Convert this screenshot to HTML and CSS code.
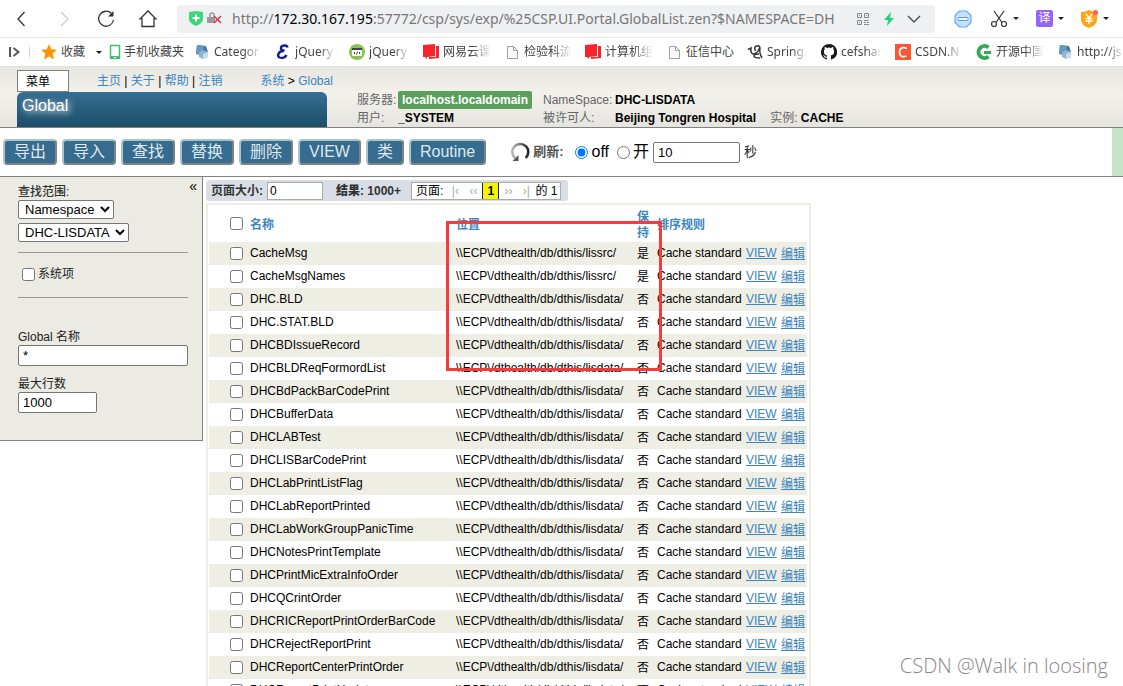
FILE: index.html
```html
<!DOCTYPE html>
<html lang="zh-CN">
<head>
<meta charset="utf-8">
<title>Global</title>
<link rel="stylesheet" href="styles.css">
</head>
<body>
<svg class="defs" aria-hidden="true">
  <symbol id="i-db" viewBox="0 0 16 16"><path d="M3 1l9 1 2 6-3 4-9-2z" fill="#477ba2"/><path d="M3 1l7 1-2 7-6 1z" fill="#6699bd"/><path d="M5 8l4-2 5 2v5l-5 2-4-2z" fill="#8db5d4"/><path d="M9 10l5-2v5l-5 2z" fill="#c9dcea"/></symbol>
  <symbol id="i-red" viewBox="0 0 16 16"><path d="M0 1l12-1v12l-8 1v2l-2-2H0z" fill="#f9242b"/><path d="M13 2h3v12l-10 1v-2h7z" fill="#f9242b"/></symbol>
  <symbol id="i-page" viewBox="0 0 16 16"><path d="M3.500 2.500h6l4 4v8h-10zM9.500 2.500v4h4" fill="#f8f8f8" stroke="#a0a0a0"/></symbol>
</svg>
<div class="browser-bar">
  <button class="icon-btn" aria-label="后退"><svg viewBox="0 0 20 20"><path d="M12.500 3L6 10l6.500 7" class="line"/></svg></button>
  <button class="icon-btn" aria-label="前进"><svg viewBox="0 0 20 20"><path d="M7 3l7 7-7 7" class="line pale"/></svg></button>
  <button class="icon-btn" aria-label="刷新"><svg viewBox="0 0 20 20"><path d="M15.500 4.500A7.500 7.500 0 1 0 17.500 11" class="line"/><path d="M17.500 2v5.500H12z" fill="#333"/></svg></button>
  <button class="icon-btn" aria-label="主页"><svg viewBox="0 0 20 20"><path d="M1.500 10.500L10 2l8.500 8.500M4 9v8.500h12V9" class="line"/></svg></button>
  <div class="address">
    <svg class="shield" viewBox="0 0 14 15"><path d="M0 1l7-1 7 1v7q0 4-7 7-7-3-7-7z" fill="#3fd67a"/><path d="M7 3.500v7M3.500 7h7" stroke="#fff" stroke-width="2"/></svg>
    <svg class="lock" viewBox="0 0 15 13"><path d="M3 6V3q0-2 2-2t2 2v2" fill="none" stroke="#999" stroke-width="1.500"/><path d="M0 5h8v6H0z" fill="#999"/><path d="M7 4l7 7M14 4l-7 7" stroke="#dc3545" stroke-width="1.500"/></svg>
    <span class="url">http://<b>172.30.167.195</b>:57772/csp/sys/exp/%25CSP.UI.Portal.GlobalList.zen?$NAMESPACE=DH</span>
    <svg class="qr" viewBox="0 0 12 12"><path d="M.5.5h4v4h-4zM7.500.5h4v4h-4zM.5 7.500h4v4h-4zM7 7.500h4.500M7 9.500h2M10 9.500h2M7 11.500h5M2 2.500h1M9 2.500h1M2 9.500h1" fill="none" stroke="#888"/></svg>
    <svg class="bolt" viewBox="0 0 12 14"><path d="M8 0L1 8h4l-1 6 7-8H7z" fill="#20d47e"/></svg>
    <svg class="chev" viewBox="0 0 14 14"><path d="M1 4l6 6 6-6" fill="none" stroke="#555" stroke-width="1.500"/></svg>
  </div>
  <div class="tools">
    <svg class="tool" viewBox="0 0 18 18"><path d="M5.500 1h7L17 5.500v7L12.500 17h-7L1 12.500v-7z" fill="#c4e0ff" stroke="#62aaf8" stroke-width="1.200"/><rect x="4" y="7.500" width="10" height="3" rx="1" fill="#fff" stroke="#4b9df5"/></svg>
    <svg class="tool scissors" viewBox="0 0 18 18"><path d="M4 1l8 11.500M14 1L6 12.500" fill="none" stroke="#333" stroke-width="1.200"/><circle cx="4" cy="14" r="2.500" fill="none" stroke="#333" stroke-width="1.200"/><circle cx="14" cy="14" r="2.500" fill="none" stroke="#333" stroke-width="1.200"/></svg>
    <i class="caret"></i>
    <span class="translate">译</span>
    <i class="caret"></i>
    <svg class="tool coin" viewBox="0 0 18 18"><path d="M9 0q4 2 8 2v8q0 5-8 8-8-3-8-8V2q4 0 8-2z" fill="#ffa51c"/><path d="M6 4l3 4 3-4M9 8v6M5.500 8.500h7M5.500 11h7" fill="none" stroke="#fff" stroke-width="1.300"/><circle cx="15.500" cy="2.500" r="2.500" fill="#ff5b5b"/></svg>
    <i class="caret"></i>
  </div>
</div>
<nav class="bookmarks">
  <svg class="toggle" viewBox="0 0 12 12"><path d="M2 1v10" stroke="#555" stroke-width="2"/><path d="M5.500 2l5 4-5 4" fill="none" stroke="#555" stroke-width="2"/></svg>
  <i class="divider"></i>
  <a class="mark fav"><svg viewBox="0 0 16 16"><path d="M8 0l2.300 5.200 5.700.6-4.300 3.800 1.300 5.900L8 12.500l-5 3 1.300-5.900L0 5.800l5.700-.6z" fill="#ff9500"/></svg><span class="label full">收藏</span></a>
  <i class="caret"></i>
  <a class="mark phone"><svg viewBox="0 0 16 16"><path d="M3.500 1.500h9v12h-9z" fill="#fff" stroke="#42bf72" stroke-width="1.500"/><path d="M3 12h10v3H3z" fill="#42bf72"/><path d="M7 13.500h2" stroke="#fff"/></svg><span class="label full">手机收藏夹</span></a>
  <a class="mark"><svg><use href="#i-db"/></svg><span class="label">Categor</span></a>
  <a class="mark"><svg viewBox="0 0 16 16"><path d="M12.500 3.500Q12 1 9 1.500C5 2 5 6 8.500 6.500h1M8.500 7C3 7 2 12 4.500 13.500c2.500 1 6 0 7-2.500" fill="none" stroke="#111b93" stroke-width="2.400"/></svg><span class="label short">jQuery</span></a>
  <a class="mark"><svg viewBox="0 0 16 16"><circle cx="8" cy="8" r="8" fill="#8bc34a"/><rect x="3" y="4" width="10" height="8" rx="1" fill="#fff"/><path d="M3 4h10v2H3z" fill="#37474f"/><path d="M6 8L5 9l1 1M10 8l1 1-1 1M8.500 7.500l-1 3" fill="none" stroke="#37474f"/></svg><span class="label short">jQuery</span></a>
  <a class="mark"><svg><use href="#i-red"/></svg><span class="label">网易云课</span></a>
  <a class="mark"><svg><use href="#i-page"/></svg><span class="label">检验科流</span></a>
  <a class="mark"><svg><use href="#i-red"/></svg><span class="label">计算机组</span></a>
  <a class="mark"><svg><use href="#i-page"/></svg><span class="label solid">征信中心</span></a>
  <a class="mark"><svg viewBox="0 0 16 16"><path d="M1 5.500L4 4q-1 6 3 6 4-1 6-7M8.500 7q-2-4 1-5t3.500 2q-1 5 2 10M12 10q-5 0-5 2t6 2" fill="none" stroke="#333" stroke-width="1.500"/></svg><span class="label short">Spring.</span></a>
  <a class="mark"><svg viewBox="0 0 16 16"><path d="M8 0a8 8 0 0 0-2.500 15.600c.4 0 .5-.2.500-.4v-1.500c-2.200.5-2.700-1-2.700-1-.4-.9-.9-1.200-.9-1.200-.7-.5.1-.5.100-.5.800.1 1.200.8 1.200.8.700 1.300 1.900.9 2.300.7.100-.5.300-.9.500-1.100-1.800-.2-3.600-.9-3.600-4 0-.9.300-1.600.8-2.200-.1-.2-.4-1 .1-2.100 0 0 .7-.2 2.200.8a7.500 7.500 0 0 1 4 0c1.500-1 2.200-.8 2.200-.8.400 1.100.2 1.900.1 2.100.500.6.8 1.300.8 2.200 0 3.100-1.900 3.700-3.700 3.900.3.300.6.800.6 1.500v2.400c0 .2.100.5.600.4A8 8 0 0 0 8 0z" fill="#181717"/></svg><span class="label short">cefshar</span></a>
  <a class="mark"><svg viewBox="0 0 16 16"><path d="M0 0h16v16H0z" fill="#fc5531"/><path d="M12 4.500q-7-3-7.500 3.500 0 6.500 7 4" fill="none" stroke="#fff" stroke-width="1.800"/></svg><span class="label">CSDN.N</span></a>
  <a class="mark"><svg viewBox="0 0 16 16"><path d="M12.500 3.500A6 6 0 1 0 12.500 12.500" fill="none" stroke="#35a853" stroke-width="4"/><path d="M8 7h7v3H8z" fill="#35a853"/></svg><span class="label">开源中国</span></a>
  <a class="mark"><svg><use href="#i-db"/></svg><span class="label">http://js</span></a>
</nav>
<header class="header">
  <div class="brand">
    <div class="crumbs">
      <button class="menu-btn">菜单</button>
      <div class="links"><a href="#">主页</a> | <a href="#">关于</a> | <a href="#">帮助</a> | <a href="#">注销</a></div>
      <div class="path"><a href="#">系统</a> &gt; <a href="#">Global</a></div>
    </div>
    <h1 class="title">Global</h1>
  </div>
  <div class="info">
    <span>服务器:</span><b class="host">localhost.localdomain</b><span>NameSpace:</span><b>DHC-LISDATA</b>
    <span>用户:</span><b>_SYSTEM</b><span>被许可人:</span><div class="owner"><b>Beijing Tongren Hospital</b><span>实例: <b>CACHE</b></span></div>
  </div>
</header>
<div class="actions">
  <button class="act">导出</button><button class="act">导入</button><button class="act">查找</button><button class="act">替换</button><button class="act">删除</button><button class="act">VIEW</button><button class="act">类</button><button class="act">Routine</button>
  <div class="refresh">
    <svg class="reload" viewBox="0 0 20 20"><defs><linearGradient id="g" x1="0" x2="1"><stop offset="0" stop-color="#bbb"/><stop offset="1" stop-color="#222"/></linearGradient></defs><path d="M5 16A8 8 0 1 1 15.500 16" fill="none" stroke="url(#g)" stroke-width="2.600"/><path d="M2.500 19h6v-6z" fill="#555"/></svg>
    <strong>刷新:</strong>
    <label class="radio"><input type="radio" name="auto" checked>off</label>
    <label class="radio"><input type="radio" name="auto">开</label>
    <input class="field seconds" type="text" value="10" aria-label="秒">
    <span class="unit">秒</span>
  </div>
  <i class="edge"></i>
</div>
<main class="content">
  <aside class="sidebar">
    <button class="collapse" aria-label="收起">«</button>
    <label class="scope" for="scope">查找范围:</label>
    <select id="scope" class="pick"><option>Namespace</option></select>
    <select class="pick second" aria-label="Namespace"><option>DHC-LISDATA</option></select>
    <hr>
    <label class="system"><input type="checkbox">系统项</label>
    <hr>
    <label class="caption first" for="mask">Global 名称</label>
    <input class="field wide" id="mask" type="text" value="*">
    <label class="caption" for="max">最大行数</label>
    <input class="field max" id="max" type="text" value="1000">
  </aside>
  <section class="results">
    <div class="pager">
      <label for="size">页面大小:</label><input id="size" class="size" type="text" value="0">
      <b class="count">结果: 1000+</b>
      <div class="pages"><span>页面:</span><button>|‹</button><button>‹‹</button><b class="current">1</b><button>››</button><button>›|</button><span>的 1</span></div>
    </div>
    <div class="frame">
      <table>
        <colgroup><col class="c-check"><col class="c-name"><col class="c-loc"><col class="c-keep"><col class="c-rule"><col class="c-view"><col class="c-edit"></colgroup>
        <thead><tr><th><input type="checkbox" aria-label="全选"></th><th>名称</th><th>位置</th><th>保持</th><th>排序规则</th><th></th><th></th></tr></thead>
        <tbody>
          <tr><td><input type="checkbox" aria-label="CacheMsg"></td><td>CacheMsg</td><td>\\ECP\/dthealth/db/dthis/lissrc/</td><td>是</td><td>Cache standard</td><td><a href="#">VIEW</a></td><td><a href="#">编辑</a></td></tr>
          <tr><td><input type="checkbox" aria-label="CacheMsgNames"></td><td>CacheMsgNames</td><td>\\ECP\/dthealth/db/dthis/lissrc/</td><td>是</td><td>Cache standard</td><td><a href="#">VIEW</a></td><td><a href="#">编辑</a></td></tr>
          <tr><td><input type="checkbox" aria-label="DHC.BLD"></td><td>DHC.BLD</td><td>\\ECP\/dthealth/db/dthis/lisdata/</td><td>否</td><td>Cache standard</td><td><a href="#">VIEW</a></td><td><a href="#">编辑</a></td></tr>
          <tr><td><input type="checkbox" aria-label="DHC.STAT.BLD"></td><td>DHC.STAT.BLD</td><td>\\ECP\/dthealth/db/dthis/lisdata/</td><td>否</td><td>Cache standard</td><td><a href="#">VIEW</a></td><td><a href="#">编辑</a></td></tr>
          <tr><td><input type="checkbox" aria-label="DHCBDIssueRecord"></td><td>DHCBDIssueRecord</td><td>\\ECP\/dthealth/db/dthis/lisdata/</td><td>否</td><td>Cache standard</td><td><a href="#">VIEW</a></td><td><a href="#">编辑</a></td></tr>
          <tr><td><input type="checkbox" aria-label="DHCBLDReqFormordList"></td><td>DHCBLDReqFormordList</td><td>\\ECP\/dthealth/db/dthis/lisdata/</td><td>否</td><td>Cache standard</td><td><a href="#">VIEW</a></td><td><a href="#">编辑</a></td></tr>
          <tr><td><input type="checkbox" aria-label="DHCBdPackBarCodePrint"></td><td>DHCBdPackBarCodePrint</td><td>\\ECP\/dthealth/db/dthis/lisdata/</td><td>否</td><td>Cache standard</td><td><a href="#">VIEW</a></td><td><a href="#">编辑</a></td></tr>
          <tr><td><input type="checkbox" aria-label="DHCBufferData"></td><td>DHCBufferData</td><td>\\ECP\/dthealth/db/dthis/lisdata/</td><td>否</td><td>Cache standard</td><td><a href="#">VIEW</a></td><td><a href="#">编辑</a></td></tr>
          <tr><td><input type="checkbox" aria-label="DHCLABTest"></td><td>DHCLABTest</td><td>\\ECP\/dthealth/db/dthis/lisdata/</td><td>否</td><td>Cache standard</td><td><a href="#">VIEW</a></td><td><a href="#">编辑</a></td></tr>
          <tr><td><input type="checkbox" aria-label="DHCLISBarCodePrint"></td><td>DHCLISBarCodePrint</td><td>\\ECP\/dthealth/db/dthis/lisdata/</td><td>否</td><td>Cache standard</td><td><a href="#">VIEW</a></td><td><a href="#">编辑</a></td></tr>
          <tr><td><input type="checkbox" aria-label="DHCLabPrintListFlag"></td><td>DHCLabPrintListFlag</td><td>\\ECP\/dthealth/db/dthis/lisdata/</td><td>否</td><td>Cache standard</td><td><a href="#">VIEW</a></td><td><a href="#">编辑</a></td></tr>
          <tr><td><input type="checkbox" aria-label="DHCLabReportPrinted"></td><td>DHCLabReportPrinted</td><td>\\ECP\/dthealth/db/dthis/lisdata/</td><td>否</td><td>Cache standard</td><td><a href="#">VIEW</a></td><td><a href="#">编辑</a></td></tr>
          <tr><td><input type="checkbox" aria-label="DHCLabWorkGroupPanicTime"></td><td>DHCLabWorkGroupPanicTime</td><td>\\ECP\/dthealth/db/dthis/lisdata/</td><td>否</td><td>Cache standard</td><td><a href="#">VIEW</a></td><td><a href="#">编辑</a></td></tr>
          <tr><td><input type="checkbox" aria-label="DHCNotesPrintTemplate"></td><td>DHCNotesPrintTemplate</td><td>\\ECP\/dthealth/db/dthis/lisdata/</td><td>否</td><td>Cache standard</td><td><a href="#">VIEW</a></td><td><a href="#">编辑</a></td></tr>
          <tr><td><input type="checkbox" aria-label="DHCPrintMicExtraInfoOrder"></td><td>DHCPrintMicExtraInfoOrder</td><td>\\ECP\/dthealth/db/dthis/lisdata/</td><td>否</td><td>Cache standard</td><td><a href="#">VIEW</a></td><td><a href="#">编辑</a></td></tr>
          <tr><td><input type="checkbox" aria-label="DHCQCrintOrder"></td><td>DHCQCrintOrder</td><td>\\ECP\/dthealth/db/dthis/lisdata/</td><td>否</td><td>Cache standard</td><td><a href="#">VIEW</a></td><td><a href="#">编辑</a></td></tr>
          <tr><td><input type="checkbox" aria-label="DHCRICReportPrintOrderBarCode"></td><td>DHCRICReportPrintOrderBarCode</td><td>\\ECP\/dthealth/db/dthis/lisdata/</td><td>否</td><td>Cache standard</td><td><a href="#">VIEW</a></td><td><a href="#">编辑</a></td></tr>
          <tr><td><input type="checkbox" aria-label="DHCRejectReportPrint"></td><td>DHCRejectReportPrint</td><td>\\ECP\/dthealth/db/dthis/lisdata/</td><td>否</td><td>Cache standard</td><td><a href="#">VIEW</a></td><td><a href="#">编辑</a></td></tr>
          <tr><td><input type="checkbox" aria-label="DHCReportCenterPrintOrder"></td><td>DHCReportCenterPrintOrder</td><td>\\ECP\/dthealth/db/dthis/lisdata/</td><td>否</td><td>Cache standard</td><td><a href="#">VIEW</a></td><td><a href="#">编辑</a></td></tr>
          <tr><td><input type="checkbox" aria-label="DHCReportPrintUpdate"></td><td>DHCReportPrintUpdate</td><td>\\ECP\/dthealth/db/dthis/lisdata/</td><td>否</td><td>Cache standard</td><td><a href="#">VIEW</a></td><td><a href="#">编辑</a></td></tr>
        </tbody>
      </table>
      <div class="highlight"></div>
    </div>
  </section>
  <div class="watermark">CSDN @Walk in loosing</div>
</main>
</body>
</html>
```
FILE: styles.css
```css
* { box-sizing: border-box; }
body {
  margin: 0;
  height: 100vh;
  overflow: hidden;
  display: flex;
  flex-direction: column;
  background: #fff;
  color: #000;
  font: 12px/16px "Liberation Sans", "Noto Sans CJK SC", sans-serif;
}
button, input, select { font-family: inherit; margin: 0; }
a { color: #3c85bd; text-decoration: none; }
svg { flex: none; display: block; }
.defs { position: absolute; width: 0; height: 0; }
.line { fill: none; stroke: #333; stroke-width: 1.3; }
.pale { stroke: #ccc; }
.caret {
  flex: none;
  border: 3px solid transparent;
  border-top-color: #222;
  border-bottom: 0;
}

.browser-bar {
  flex: none;
  height: 38px;
  display: flex;
  align-items: center;
  padding-left: 12px;
  border-bottom: 1px solid #e8e8ea;
}
.icon-btn {
  width: 20px;
  height: 20px;
  margin-right: 22px;
  padding: 0;
  border: 0;
  background: none;
}
.icon-btn svg { width: 20px; height: 20px; }
.icon-btn:nth-child(4) { margin-right: 19px; }
.address {
  flex: 1;
  min-width: 0;
  height: 28px;
  padding: 0 14px 0 12px;
  display: flex;
  align-items: center;
  border-radius: 4px;
  background: #eff0f2;
}
.shield { width: 14px; height: 15px; }
.lock { width: 15px; height: 13px; margin: 0 10px 0 4px; }
.url {
  flex: 1;
  white-space: nowrap;
  color: #777;
  font: 14px/24px "Noto Sans", sans-serif;
}
.url b { color: #000; font-weight: 400; }
.qr { width: 12px; height: 12px; margin-left: 8px; }
.bolt { width: 12px; height: 14px; margin: 0 12px 0 14px; }
.chev { width: 14px; height: 14px; }
.tools { flex: none; width: 188px; padding-left: 19px; display: flex; align-items: center; }
.tool { width: 18px; height: 18px; }
.scissors { margin-left: 18px; }
.tools .caret { margin-left: 5px; }
.translate {
  width: 17px;
  height: 17px;
  margin-left: 17px;
  border-radius: 2px;
  background: #9463f7;
  color: #fff;
  text-align: center;
}
.coin { margin-left: 16px; }

.bookmarks {
  flex: none;
  height: 28px;
  overflow: hidden;
  display: flex;
  align-items: center;
  padding-left: 8px;
  font-family: "Noto Sans", "Noto Sans CJK SC", sans-serif;
}
.toggle { width: 12px; height: 12px; }
.divider { flex: none; width: 1px; height: 10px; margin: 0 11px 0 9px; background: #ccc; }
.mark { flex: none; display: flex; align-items: center; gap: 4px; margin-right: 13px; color: #444; }
.mark svg { width: 16px; height: 16px; }
.fav { margin-right: 11px; }
.phone { margin-left: 5px; gap: 1px; margin-right: 10px; }
.label {
  width: 48px;
  white-space: nowrap;
  mask-image: linear-gradient(90deg, #000 60%, transparent);
}
.short { width: 41px; }
.full { width: auto; mask-image: none; }
.solid { mask-image: none; }

.header {
  flex: none;
  display: flex;
  height: 62px;
  border-top: 1px solid #e2e1dc;
  border-bottom: 1px solid #808080;
  background: linear-gradient(#e7e6e1, #f2f1ec 45%, #e5e4de);
}
.brand { flex: none; width: 357px; padding: 2px 0 0 17px; display: flex; flex-direction: column; }
.crumbs { display: flex; align-items: center; height: 23px; white-space: nowrap; }
.menu-btn {
  width: 52px;
  height: 22px;
  padding: 0 8px;
  border: 1px solid #808080;
  background: #fff;
  font-size: 12px;
  text-align: left;
}
.links { margin: 0 38px 0 28px; }
.title {
  flex: 1;
  width: 310px;
  margin: 0;
  padding: 5px;
  border-radius: 6px 6px 0 0;
  background: linear-gradient(#366f93, #1b4e68);
  color: #fff;
  font-size: 16px;
  font-weight: 400;
  line-height: 18px;
  text-shadow: 2px 2px 6px #fff;
}
.info {
  display: grid;
  grid-template-columns: 41px 145px 72px auto;
  grid-auto-rows: 18px;
  align-content: end;
  align-items: center;
  white-space: nowrap;
  color: #666;
}
.info b { color: #000; }
.info .host {
  justify-self: start;
  padding: 1px 4px;
  border-radius: 2px;
  background: #5aa05c;
  color: #fff;
}
.owner { display: flex; gap: 14px; }

.actions {
  flex: none;
  display: flex;
  align-items: center;
  gap: 5px;
  height: 49px;
  padding-left: 3px;
  border-bottom: 1px solid #808080;
}
.act {
  height: 26px;
  padding: 0 9px;
  border: 2px solid #808080;
  border-top-color: #a9c4cc;
  border-left-color: #a9c4cc;
  border-radius: 4px;
  background: #366c8f;
  color: #dfe9ee;
  font-size: 16px;
  line-height: 20px;
}
.refresh { display: flex; align-items: center; margin-left: 19px; color: #555; }
.reload { width: 20px; height: 20px; margin-right: 3px; }
.refresh strong { margin-right: 12px; font-size: 13px; }
.radio { display: flex; align-items: center; gap: 3px; margin-right: 8px; color: #000; font-size: 16px; }
.radio input { width: 13px; height: 13px; }
.field {
  height: 21px;
  padding: 0 4px;
  border: 1px solid #767676;
  border-radius: 2px;
  background: #fff;
  font-size: 13px;
}
.radio + .field { margin-left: -4px; }
.seconds { width: 87px; margin-right: 4px; }
.unit { color: #222; font-size: 13px; }
.edge { align-self: stretch; width: 11px; margin-left: auto; background: #c5e5c8; }

.content { position: relative; flex: 1; min-height: 0; display: flex; align-items: flex-start; overflow: hidden; }
.sidebar {
  position: relative;
  flex: none;
  width: 203px;
  padding: 7px 14px 27px 18px;
  display: flex;
  flex-direction: column;
  align-items: flex-start;
  border-right: 1px solid #808080;
  border-bottom: 1px solid #808080;
  background: #ebeae3;
  color: #222;
}
.collapse {
  position: absolute;
  top: 0;
  right: 5px;
  padding: 0;
  border: 0;
  background: none;
  font-size: 14px;
  line-height: 18px;
}
.scope { color: #333; font-weight: 500; }
.pick {
  height: 19px;
  padding: 0 2px;
  border: 1px solid #767676;
  border-radius: 2px;
  background: #fff;
  color: #000;
  font-size: 13px;
}
.second { margin-top: 4px; }
.sidebar hr { width: 170px; height: 1px; margin: 10px 0 12px; border: 0; background: #999; }
.system { display: flex; align-items: center; gap: 3px; margin: 0 0 4px 4px; height: 18px; }
.system input { width: 13px; height: 13px; }
.caption { margin-top: 11px; line-height: 15px; }
.first { margin-top: 20px; }
.wide { width: 170px; }
.max { width: 79px; }

.results { padding: 3px 0 0 3px; }
.pager {
  display: flex;
  align-items: center;
  width: max-content;
  height: 21px;
  padding: 0 7px 0 5px;
  border-radius: 3px;
  background: #d9dde6;
  color: #333;
  font-weight: 700;
}
.size {
  width: 56px;
  height: 18px;
  margin: 0 13px 0 4px;
  padding: 0 2px;
  border: 1px solid #aaa;
  font-size: 12px;
}
.count { margin-right: 10px; }
.pages {
  display: flex;
  align-items: center;
  height: 18px;
  padding: 0 3px 0 4px;
  border: 1px solid #aaa;
  background: #fff;
  color: #000;
  font-weight: 400;
}
.pages button { width: 18px; padding: 0; border: 0; background: none; color: #aaa; font-size: 12px; }
.pages span:first-child { margin-right: 3px; }
.current { width: 17px; height: 16px; border: solid #222; border-width: 0 1px; background: #f5f500; text-align: center; }

.frame { position: relative; width: 605px; margin-top: 2px; padding: 0 2px 0 1px; border: 2px solid #efeee5; }
table { width: 100%; table-layout: fixed; border-collapse: collapse; }
.c-check { width: 41px; }
.c-name { width: 206px; }
.c-loc { width: 181px; }
.c-keep { width: 20px; }
.c-rule { width: 89px; }
.c-view { width: 35px; }
th, td { height: 23px; padding: 0 0 2px; text-align: left; white-space: nowrap; line-height: 16px; }
th { height: 37px; padding: 2px 0 0; color: #3c85bd; }
th:nth-child(4) { padding-right: 7px; white-space: normal; }
th:first-child, td:first-child { padding: 0 0 0 21px; }
td:nth-child(4), td:last-child { padding-bottom: 0; }
td a { text-decoration: underline; }
td input, th input { display: block; width: 13px; height: 13px; }
tbody tr:nth-child(odd) { background: #efeee5; }
.highlight { position: absolute; top: 16px; left: 238px; width: 216px; height: 150px; border: 3px solid #f93a3a; }
.watermark { position: absolute; right: 15px; bottom: 8px; color: #888; font: 300 20px/24px "Open Sans", sans-serif; }
```
